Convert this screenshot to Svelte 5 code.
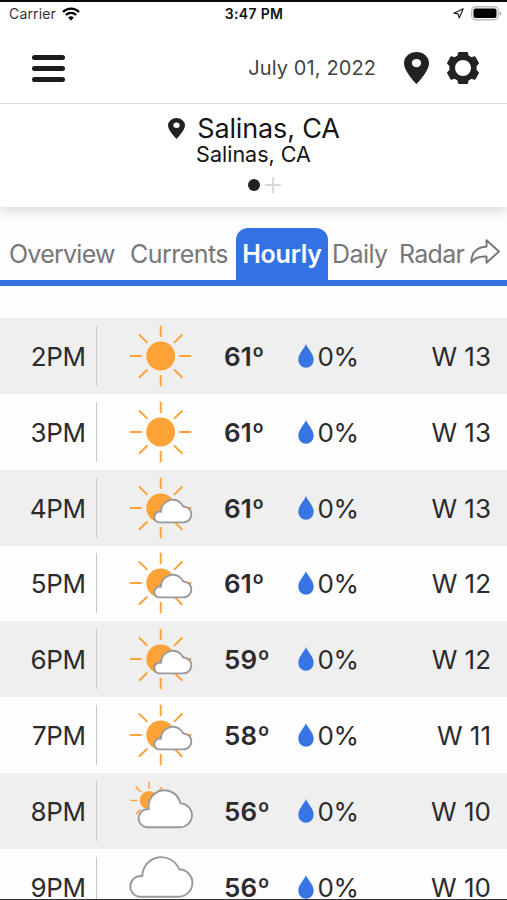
<script lang="ts">
  type Sky = "sunny" | "partly" | "mostly" | "cloudy";

  interface Hour {
    time: string;
    sky: Sky;
    temp: number;
    rain: number;
    wind: string;
  }

  const tabs = ["Overview", "Currents", "Hourly", "Daily", "Radar"];
  let activeTab = $state("Hourly");

  const hours: Hour[] = [
    { time: "2PM", sky: "sunny", temp: 61, rain: 0, wind: "W 13" },
    { time: "3PM", sky: "sunny", temp: 61, rain: 0, wind: "W 13" },
    { time: "4PM", sky: "partly", temp: 61, rain: 0, wind: "W 13" },
    { time: "5PM", sky: "partly", temp: 61, rain: 0, wind: "W 12" },
    { time: "6PM", sky: "partly", temp: 59, rain: 0, wind: "W 12" },
    { time: "7PM", sky: "partly", temp: 58, rain: 0, wind: "W 11" },
    { time: "8PM", sky: "mostly", temp: 56, rain: 0, wind: "W 10" },
    { time: "9PM", sky: "cloudy", temp: 56, rain: 0, wind: "W 10" },
  ];
</script>

{#snippet pin(cls: string)}
  <svg class={cls} viewBox="5 2 14 20" preserveAspectRatio="none">
    <path fill="#222" fill-rule="evenodd" d="M12 2a7 7 0 0 0-7 7c0 5.200 7 13 7 13s7-7.800 7-13a7 7 0 0 0-7-7zm0 9.500a2.600 2.600 0 1 1 0-5.200 2.600 2.600 0 0 1 0 5.200z" />
  </svg>
{/snippet}

<div class="screen">
  <div class="status">
    <div class="carrier">
      <span>Carrier</span>
      <svg width="18" height="14" viewBox="0 0 18 14" fill="none" stroke="#000" stroke-width="2.300">
        <path d="M1 5A11.300 11.300 0 0 1 17 5" />
        <path d="M3.900 8A7.200 7.200 0 0 1 14.100 8" />
        <path d="M9 13.600L6.200 10.700A4 4 0 0 1 11.800 10.700Z" fill="#000" stroke="none" />
      </svg>
    </div>
    <span class="clock">3:47 PM</span>
    <div class="battery">
      <svg width="11" height="11" viewBox="0 0 11 11" fill="none" stroke="#222" stroke-width="1.200" stroke-linejoin="round">
        <path d="M10.200 0.800L0.900 5.200L5 5.900L6.200 10Z" />
      </svg>
      <svg width="31" height="15" viewBox="0 0 31 15">
        <rect x="0.700" y="0.700" width="26.600" height="13" rx="4" fill="#fff" stroke="#bbb" stroke-width="1.400" />
        <rect x="2.500" y="2.400" width="23" height="9.600" rx="2" fill="#000" />
        <path d="M28.600 5v4.600q1.900-.7 1.900-2.300t-1.900-2.300z" fill="#aaa" />
      </svg>
    </div>
  </div>

  <header>
    <button class="menu" aria-label="Menu"><i></i><i></i><i></i></button>
    <span class="date">July 01, 2022</span>
    {@render pin("pin-large")}
    <svg class="gear" viewBox="0 0 32 32">
      <path
        fill="#222"
        fill-rule="evenodd"
        d="M11 0.800Q11.200 0 12 0H20Q20.800 0 21 0.800L21.500 3.500L24.500 5.200L27.300 4.300Q28.100 4.100 28.500 4.800L31.800 10.700Q32.200 11.500 31.600 12L29.600 13.900V18.100L31.600 20Q32.200 20.500 31.800 21.300L28.500 27.200Q28.100 27.900 27.300 27.700L24.500 26.800L21.500 28.500L21 31.200Q20.800 32 20 32H12Q11.200 32 11 31.200L10.500 28.500L7.500 26.800L4.700 27.700Q3.900 27.900 3.500 27.200L0.200 21.300Q-0.200 20.500 0.400 20L2.400 18.100V13.900L0.400 12Q-0.200 11.500 0.200 10.700L3.500 4.800Q3.900 4.100 4.700 4.300L7.500 5.200L10.500 3.500ZM16 8A8 8 0 1 0 16 24A8 8 0 1 0 16 8Z"
      />
    </svg>
  </header>

  <section class="location">
    <div class="place">
      {@render pin("pin-small")}
      <h1>Salinas, CA</h1>
    </div>
    <p>Salinas, CA</p>
    <div class="pages">
      <i class="dot"></i>
      <svg width="16" height="16" viewBox="0 0 16 16" stroke="#d8d8d8" stroke-width="1.800">
        <path d="M8 0V16M0 8H16" />
      </svg>
    </div>
  </section>

  <nav>
    {#each tabs as tab}
      <button class="tab {tab.toLowerCase()}" class:active={tab === activeTab} onclick={() => (activeTab = tab)}>
        {tab}
      </button>
    {/each}
    <svg class="share" width="30" height="26" viewBox="0 0 30 26" fill="none" stroke="#777" stroke-width="1.900" stroke-linejoin="round">
      <path d="M16.500 1.200L29 12.500L16.500 23.800V17.500C9 17.200 4 18.800 1.200 23.500C1.500 14 6.500 8 16.500 7.500Z" />
    </svg>
  </nav>

  <main>
    {#each hours as hour, i}
      <div class="hour" class:shaded={i % 2 === 0}>
        <span class="time">{hour.time}</span>
        <svg class="sky" width="64" height="62" viewBox="-1 0 64 62" fill="none" stroke-linejoin="round">
          {#if hour.sky === "sunny" || hour.sky === "partly"}
            <circle cx="30.700" cy="31" r="14.400" fill="#fca237" />
            <path
              stroke="#fca237"
              stroke-width="1.900"
              d="M30.700 .7V12M30.700 50V61.300M0 31H11.700M49 31H61.300M9 9.500L17.400 17.900M52.400 9.500L44 17.900M9 52.700L17.400 44.500M52.400 52.700L44 44.500"
            />
          {/if}
          {#if hour.sky === "partly"}
            <path class="cloud" d="M28.500 45.400H53.500A7.950 7.950 0 0 0 53.300 29.500A11.700 11.700 0 0 0 31 34.700A5.400 5.400 0 0 0 28.500 45.400Z" />
          {:else if hour.sky === "mostly"}
            <circle cx="19" cy="20.300" r="9.200" fill="#fca237" />
            <path
              stroke="#fca237"
              stroke-width="1.500"
              d="M19 1.800V8.700M.3 20.400H7.400M5.600 6.600L11 12M32.300 7.300L27.500 12M6 34L10.500 29.500"
            />
            <path class="cloud" d="M16.500 47.200H49.800A11.900 11.900 0 0 0 50.300 23.400A16 16 0 0 0 18.800 29.200A9.050 9.050 0 0 0 16.500 47.200Z" />
          {:else if hour.sky === "cloudy"}
            <path class="cloud" d="M9 40.700H48.300A13.700 13.700 0 0 0 49 13.200A19 19 0 0 0 12.300 20.200A10.300 10.300 0 0 0 9 40.700Z" />
          {/if}
        </svg>
        <span class="temp">{hour.temp}º</span>
        <svg class="drop" width="16" height="24" viewBox="0 0 16 24">
          <path fill="#3875e4" d="M8 0C9.500 4.500 15.700 9.500 15.700 15.800A7.700 7.900 0 0 1 .3 15.800C.3 9.500 6.500 4.500 8 0Z" />
        </svg>
        <span class="rain">{hour.rain}%</span>
        <span class="wind">{hour.wind}</span>
      </div>
    {/each}
  </main>
</div>

<style>
  :global(body) {
    margin: 0;
    overflow: hidden;
  }

  .screen {
    box-sizing: border-box;
    width: 507px;
    height: 900px;
    display: flex;
    flex-direction: column;
    overflow: hidden;
    background: #fdfdfd;
    border-top: 2px solid #0c0a0c;
    border-bottom: 1px solid #333;
    font-family: Inter, "Liberation Sans", sans-serif;
    color: #2b2b2b;
  }

  button {
    padding: 0;
    border: 0;
    background: none;
    font: inherit;
    letter-spacing: inherit;
    color: inherit;
  }

  svg {
    display: block;
    flex: none;
  }

  .status {
    flex: none;
    display: grid;
    grid-template-columns: 1fr auto 1fr;
    align-items: center;
    height: 23px;
    padding: 0 5px 0 9px;
    background: #fff;
    font-size: 14px;
  }

  .carrier {
    display: flex;
    align-items: center;
    gap: 6px;
    color: #333;
  }

  .carrier span {
    letter-spacing: 0.150px;
  }

  .clock {
    margin-left: -3px;
    font-weight: 600;
    letter-spacing: 0.350px;
    color: #111;
  }

  .battery {
    display: flex;
    align-items: center;
    justify-content: flex-end;
    gap: 7px;
  }

  header {
    position: relative;
    z-index: 1;
    flex: none;
    display: flex;
    align-items: center;
    height: 79px;
    padding: 8px 28px 0 32px;
    box-sizing: border-box;
    border-bottom: 1px solid #dedede;
    background: #fff;
  }

  .menu {
    display: flex;
    flex-direction: column;
    gap: 6px;
    margin-right: auto;
  }

  .menu i {
    width: 33px;
    height: 5px;
    border-radius: 3px;
    background: #1c1c1c;
  }

  .date {
    margin: 0 28px 0 0;
    font-size: 20px;
    letter-spacing: 0.100px;
    color: #444;
  }

  .pin-large {
    width: 25px;
    height: 32px;
    margin-right: 18px;
  }

  .gear {
    width: 32px;
    height: 32px;
  }

  .location {
    flex: none;
    display: flex;
    flex-direction: column;
    align-items: center;
    height: 103px;
    box-sizing: border-box;
    padding-top: 9px;
    background: #fff;
    color: #151515;
    box-shadow: 0 2px 14px rgba(0, 0, 0, 0.180);
  }

  .place {
    display: flex;
    align-items: center;
    gap: 12px;
    margin-left: 1px;
  }

  .pin-small {
    width: 17px;
    height: 21px;
  }

  h1 {
    margin: 0;
    font-size: 27px;
    font-weight: 400;
    line-height: 31px;
    letter-spacing: -0.150px;
  }

  .location p {
    margin: 0;
    font-size: 21.500px;
    line-height: 20px;
  }

  .pages {
    display: flex;
    align-items: center;
    gap: 5px;
    margin: 13px 0 0 21px;
  }

  .dot {
    width: 12px;
    height: 12px;
    border-radius: 50%;
    background: #222;
  }

  nav {
    flex: none;
    display: flex;
    align-items: center;
    height: 79px;
    box-sizing: border-box;
    padding: 21px 6px 0 9px;
    border-bottom: 6px solid #3372e4;
    font-size: 25px;
    letter-spacing: -0.550px;
    color: #777;
  }

  .tab {
    flex: none;
    height: 52px;
    text-align: left;
    white-space: nowrap;
  }

  .overview {
    width: 121px;
    letter-spacing: -0.750px;
  }

  .currents {
    width: 106px;
  }

  .hourly {
    width: 92px;
  }

  .daily {
    width: 71px;
    padding-left: 4px;
    box-sizing: border-box;
  }

  .radar {
    width: 71px;
    letter-spacing: -0.700px;
  }

  .tab.active {
    border-radius: 12px 12px 0 0;
    background: #3372e4;
    font-weight: 600;
    letter-spacing: -0.200px;
    color: #fff;
    text-align: center;
  }

  .share {
    margin-top: -5px;
  }

  main {
    padding-top: 32px;
  }

  .hour {
    display: flex;
    align-items: center;
    height: 75.850px;
    box-sizing: border-box;
    padding-right: 16px;
    font-size: 26px;
  }

  .hour.shaded {
    background: #efefef;
  }

  .time {
    width: 97px;
    height: 60px;
    box-sizing: border-box;
    padding-right: 10.500px;
    border-right: 1px solid #c9c9c9;
    line-height: 61px;
    letter-spacing: -0.400px;
    text-align: right;
  }

  .sky {
    margin-left: 32px;
    overflow: visible;
  }

  .cloud {
    fill: #fff;
    stroke: #999;
    stroke-width: 1.900;
  }

  .temp,
  .rain,
  .wind {
    padding-top: 1px;
  }

  .temp {
    width: 72px;
    margin-left: 31px;
    font-weight: 600;
    letter-spacing: 0.200px;
  }

  .drop {
    margin-left: 1.500px;
  }

  .rain {
    margin-left: 4px;
    letter-spacing: -0.400px;
  }

  .wind {
    margin-left: auto;
  }
</style>
